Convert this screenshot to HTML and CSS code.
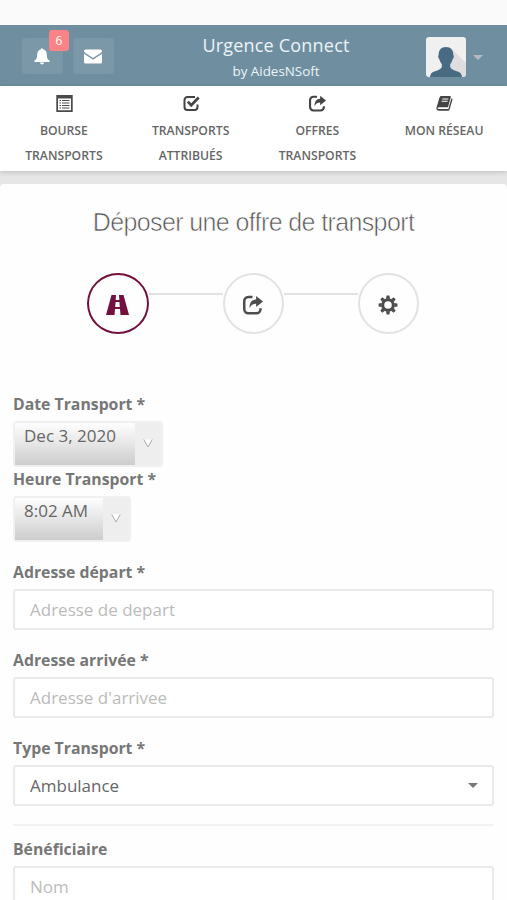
FILE: index.html
```html
<!DOCTYPE html>
<html lang="fr">
<head>
<meta charset="utf-8">
<title>Urgence Connect</title>
<link rel="stylesheet" href="styles.css">
</head>
<body>
<svg class="defs" width="0" height="0">
  <symbol id="share" viewBox="0 0 16 16">
    <path d="M7.600 1.600H4.200A3.200 3.200 0 0 0 1 4.800V11.400A3.200 3.200 0 0 0 4.200 14.600H10.800A3.200 3.200 0 0 0 14 11.400V10.500" fill="none" stroke="currentColor" stroke-width="2"/>
    <path d="M10.500 .8 16 5.200 10.500 9.600V7C8 7 6.500 7.800 5.200 10.500 5.200 6 7 3.600 10.500 3.500Z" fill="currentColor"/>
  </symbol>
</svg>
<div class="status"></div>
<header class="topbar">
  <div class="actions">
    <button class="action" aria-label="Notifications">
      <svg width="16" height="17" viewBox="0 0 16 17"><path fill="currentColor" d="M7 1.300a1 1 0 0 1 2 0C11.800 1.900 12.800 4 12.800 6.500c0 3.500.8 4.800 2.800 6.200V14H.4v-1.300c2-1.400 2.800-2.700 2.800-6.200C3.200 4 4.200 1.900 7 1.300ZM6 14.600h4a2 2 0 0 1-4 0Z"/></svg>
      <span class="badge">6</span>
    </button>
    <button class="action" aria-label="Messages">
      <svg width="18" height="15" viewBox="0 0 18 15"><path fill="currentColor" d="M1.500.5h15q1.500 0 1.500 1.600Q18 3 16.500 4L9 9 1.500 4Q0 3 0 2.100 0 .5 1.500.5ZM0 4.800 9 10.800 18 4.800V13q0 1.500-1.500 1.500h-15Q0 14.500 0 13Z"/></svg>
    </button>
  </div>
  <div class="brand">
    <div class="brand-name">Urgence Connect</div>
    <div class="brand-by">by AidesNSoft</div>
  </div>
  <div class="user">
    <svg class="avatar" width="40" height="40" viewBox="0 0 40 40"><rect width="40" height="40" fill="#f0f0f0"/><path fill="#dedede" d="M26 12 40 26V40H20Z"/><path fill="#496a83" d="M20 10c5 0 7.500 3.500 7.300 8 1 .5.500 3.500-.6 4-.6 2.500-1.500 4-2.500 5v3c1 3 6 3.500 9.500 5.500 1.500 1 2 2.500 2.300 4.500H4c.3-2 .8-3.500 2.300-4.500C9.800 33.500 14.800 33 15.800 30v-3c-1-1-1.900-2.500-2.500-5-1.100-.5-1.600-3.500-.6-4C12.500 13.500 15 10 20 10Z"/></svg>
    <svg width="10" height="5" viewBox="0 0 10 5"><path fill="#b3b9bd" d="M0 0h10L5 5Z"/></svg>
  </div>
</header>
<nav class="menu">
  <a class="menu-item">
    <svg width="17" height="17" viewBox="0 0 17 17"><path fill="#4a4a4a" d="M.3 0h16.400v17H.3ZM2 3.500v11.800h13V3.500Z" fill-rule="evenodd"/><path stroke="#4a4a4a" stroke-width="1.200" d="M3.500 5.500H5M6 5.500h7.500M3.500 8H5M6 8h7.500M3.500 10.500H5M6 10.500h7.500M3.500 13H5M6 13h7.500"/></svg>
    <span>BOURSE<br>TRANSPORTS</span>
  </a>
  <a class="menu-item">
    <svg width="17" height="17" viewBox="0 0 17 17"><path fill="none" stroke="#444" stroke-width="2" d="M12 2H4.500A3 3 0 0 0 1.500 5V12A3 3 0 0 0 4.500 15H11.500A3 3 0 0 0 14.500 12V9.500"/><path fill="none" stroke="#444" stroke-width="2.700" d="m4.800 6.600 3.400 3.600 7.500-7.700"/></svg>
    <span>TRANSPORTS<br>ATTRIBUÉS</span>
  </a>
  <a class="menu-item">
    <svg width="17" height="17"><use href="#share"/></svg>
    <span>OFFRES<br>TRANSPORTS</span>
  </a>
  <a class="menu-item">
    <svg width="17" height="17" viewBox="0 0 17 17"><path fill="#444" d="M5.300 1H14q1 0 .8 1L12 12.200H3.200Q1.500 12.200 1.500 13.100 1.600 14 2.500 14H12.400L15.400 3.300Q16.800 3.600 16.400 4.900L13.600 14.600Q13.200 15.800 12.200 15.800H2.700Q.4 15.600.3 13.300L3.600 2.300Q4 1 5.300 1Z"/><path stroke="#fff" stroke-width="1.100" d="M6.300 4h6M5.600 6.300h6"/></svg>
    <span>MON RÉSEAU</span>
  </a>
</nav>
<main class="card">
  <h1 class="title">Déposer une offre de transport</h1>
  <div class="steps">
    <div class="step step-active">
      <svg width="23" height="20" viewBox="0 0 23 20"><path fill="currentColor" fill-rule="evenodd" d="M5.500 0H17.500L23 20H0ZM10 0 9.700 5H13.300L13 0ZM9.600 7 9.200 12H13.800L13.400 7ZM9 14 8.500 20H14.500L14 14Z"/></svg>
    </div>
    <div class="line"></div>
    <div class="step"><svg width="20" height="20"><use href="#share"/></svg></div>
    <div class="line"></div>
    <div class="step">
      <svg width="20" height="20" viewBox="-10 -10 20 20"><circle r="5.300" fill="none" stroke="currentColor" stroke-width="3"/><g fill="currentColor"><path id="tooth" d="M-2-6.300-1.400-9.400H1.400L2-6.300Z"/><use href="#tooth" transform="rotate(45)"/><use href="#tooth" transform="rotate(90)"/><use href="#tooth" transform="rotate(135)"/><use href="#tooth" transform="rotate(180)"/><use href="#tooth" transform="rotate(225)"/><use href="#tooth" transform="rotate(270)"/><use href="#tooth" transform="rotate(315)"/></g></svg>
    </div>
  </div>
  <form class="form">
    <label class="label">Date Transport *</label>
    <div class="picker picker-date"><span class="picker-value">Dec 3, 2020</span><span class="picker-arrow"><svg width="10" height="9" viewBox="0 0 10 9"><path fill="#fff" stroke="#aaa" d="M.8.500 5 8 9.200.5"/></svg></span></div>
    <label class="label">Heure Transport *</label>
    <div class="picker picker-time"><span class="picker-value">8:02 AM</span><span class="picker-arrow"><svg width="10" height="9" viewBox="0 0 10 9"><path fill="#fff" stroke="#aaa" d="M.8.500 5 8 9.200.5"/></svg></span></div>
    <div class="group">
      <label class="label">Adresse départ *</label>
      <div class="field placeholder">Adresse de depart</div>
    </div>
    <div class="group">
      <label class="label">Adresse arrivée *</label>
      <div class="field placeholder">Adresse d'arrivee</div>
    </div>
    <div class="group">
      <label class="label">Type Transport *</label>
      <div class="field field-select">Ambulance<svg width="10" height="5" viewBox="0 0 10 5"><path fill="#777" d="M0 0h10L5 5Z"/></svg></div>
    </div>
    <hr class="rule">
    <div class="group">
      <label class="label">Bénéficiaire</label>
      <div class="field placeholder">Nom</div>
    </div>
  </form>
</main>
</body>
</html>
```
FILE: styles.css
```css
* { box-sizing: border-box; }
body {
  margin: 0;
  height: 900px;
  overflow: hidden;
  background: #e6e6e6;
  color: #666;
  font-family: "Open Sans", "Noto Sans", sans-serif;
}
svg { display: block; flex: none; }
.defs { position: absolute; }
.status { height: 25px; background: #fafafa; }
.topbar {
  height: 61px;
  background: #6f8fa0;
  display: grid;
  grid-template-columns: 150px 1fr 107px;
  color: #edf3f7;
}
.actions { display: flex; gap: 10px; padding: 13px 0 0 22px; }
.action {
  position: relative;
  width: 41px;
  height: 36px;
  padding: 0;
  border: 0;
  border-radius: 3px;
  background: #7a98a8;
  color: #fff;
  display: flex;
  align-items: center;
  justify-content: center;
}
.action svg { margin-right: 1px; }
.badge {
  position: absolute;
  top: -8px;
  right: -6px;
  width: 20px;
  height: 21px;
  border-radius: 3px;
  background: #fb8385;
  font: 12px/21px "Open Sans", sans-serif;
  text-align: center;
}
.brand { text-align: center; padding-top: 8px; margin-left: 2px; white-space: nowrap; }
.brand-name { font-size: 18px; line-height: 25px; letter-spacing: .2px; }
.brand-by { font-size: 13.4px; line-height: 27px; }
.user { display: flex; gap: 7px; padding: 12px 0 0 26px; }
.avatar { border-radius: 3px; }
.user svg + svg { margin-top: 18px; }
.menu {
  height: 85px;
  background: #fff;
  display: grid;
  grid-template-columns: repeat(4, 1fr);
  box-shadow: 0 1px 5px rgba(0, 0, 0, .18);
}
.menu-item {
  display: flex;
  flex-direction: column;
  align-items: center;
  padding: 9px 0 0 1px;
  gap: 7px;
  text-align: center;
  font-size: 12.2px;
  font-weight: 600;
  line-height: 24.5px;
  color: #666;
}
.menu-item svg { color: #444; margin-left: 1px; }
.card { height: 720px; margin-top: 13px; background: #fefefe; border-radius: 4px 4px 0 0; }
.title {
  margin: 0;
  padding-top: 21px;
  font: 400 25px/34px "Liberation Sans", Arial, sans-serif;
  letter-spacing: -.62px;
  color: #555;
  -webkit-text-stroke: .6px #fefefe;
  text-align: center;
  white-space: nowrap;
}
.steps { display: flex; padding: 34px 0 0 87px; }
.step {
  width: 61px;
  height: 61px;
  border: 2px solid #e2e2e2;
  border-radius: 50%;
  display: flex;
  align-items: center;
  justify-content: center;
  color: #4d4d4d;
}
.step svg { margin: 2px 2px 0 0; }
.step-active { border-color: #73103d; color: #73103d; width: 62px; }
.line { width: 74px; height: 2px; margin-top: 20px; background: #e2e2e2; }
.form { padding: 57px 13px 0; }
.label { display: block; font-size: 15.8px; font-weight: 700; line-height: 27px; color: #777; }
.picker {
  height: 46px;
  margin: 3px 0 0;
  border: 2px solid #f0f0f0;
  border-radius: 4px;
  display: flex;
  background: #eee;
  font-size: 17px;
  line-height: 25px;
}
.picker + .label { margin-top: -1px; }
.picker-date { width: 150px; }
.picker-time { width: 118px; }
.picker-value { flex: 1; padding-left: 9px; background: linear-gradient(#fefefe, #cdcdcd); white-space: nowrap; }
.picker-arrow { width: 26px; display: flex; align-items: center; justify-content: center; }
.picker-arrow svg { margin-bottom: 2px; }
.group { margin-bottom: 17px; }
.picker-time + .group { padding-top: 17px; }
.group .field { margin-top: 3px; }
.field {
  height: 41px;
  padding: 0 15px;
  border: 2px solid #eaeaea;
  border-radius: 3px;
  background: #fff;
  display: flex;
  align-items: center;
  justify-content: space-between;
  font-size: 17px;
  line-height: 24px;
}
.field-select { padding-right: 14px; }
.placeholder { color: #bbb; }
.rule { margin: 18px 0 10px; border: 0; height: 2px; background: #f2f2f2; }
```
